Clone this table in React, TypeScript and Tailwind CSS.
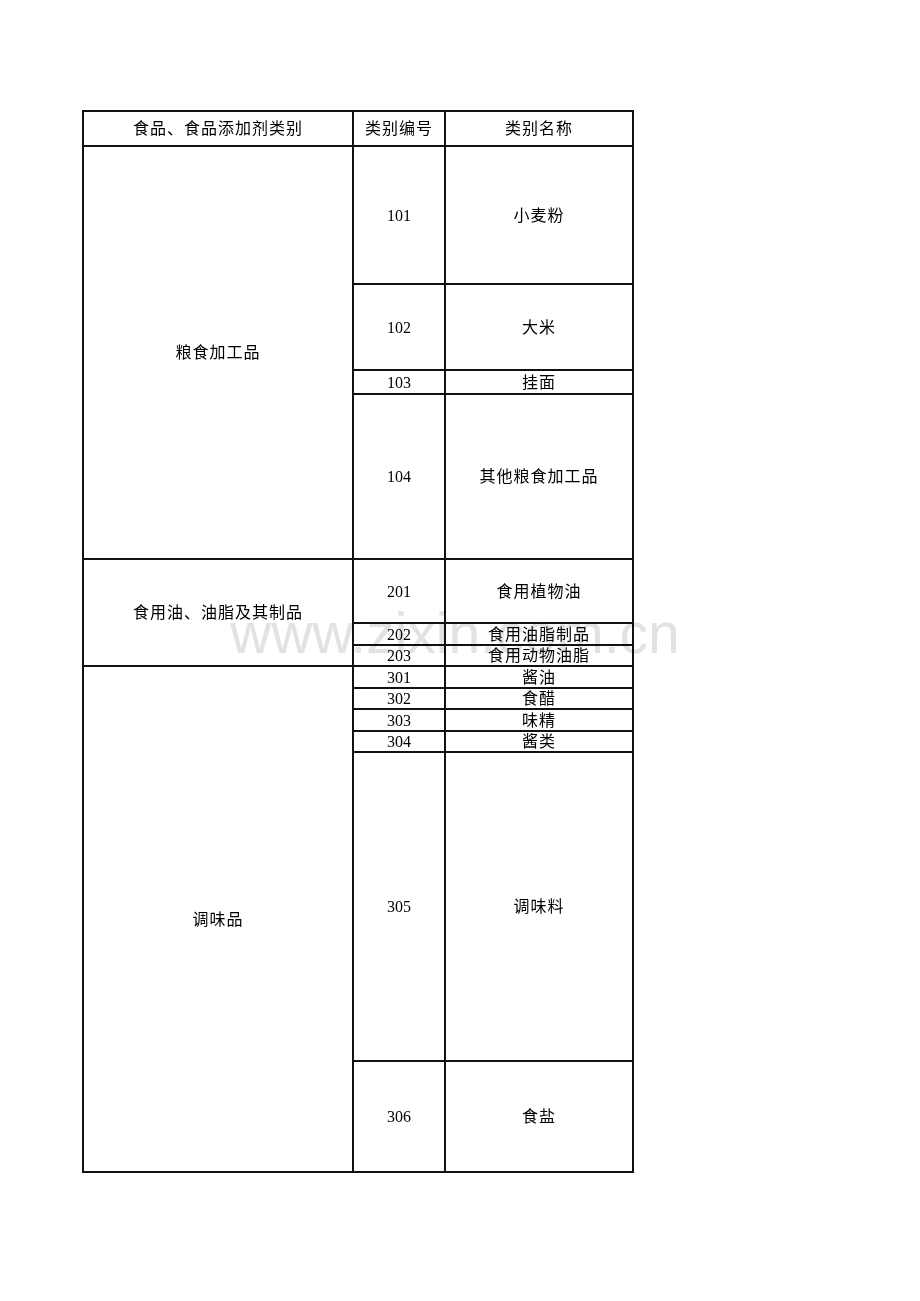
import React from "react";

const cell = "bg-white flex items-center justify-center leading-none pt-[1px]";
const cjk = "text-[16px] tracking-[1px]";
const num = "text-[16px]";

type Row = { code: string; name: string; pos: string };

const rows: Row[] = [
  { code: "101", name: "小麦粉", pos: "row-start-2" },
  { code: "102", name: "大米", pos: "row-start-3" },
  { code: "103", name: "挂面", pos: "row-start-4" },
  { code: "104", name: "其他粮食加工品", pos: "row-start-5" },
  { code: "201", name: "食用植物油", pos: "row-start-6" },
  { code: "202", name: "食用油脂制品", pos: "row-start-7" },
  { code: "203", name: "食用动物油脂", pos: "row-start-8" },
  { code: "301", name: "酱油", pos: "row-start-9" },
  { code: "302", name: "食醋", pos: "row-start-10" },
  { code: "303", name: "味精", pos: "row-start-11" },
  { code: "304", name: "酱类", pos: "row-start-12" },
  { code: "305", name: "调味料", pos: "row-start-13" },
  { code: "306", name: "食盐", pos: "row-start-14" },
];

export default function App() {
  return (
    <div className="relative w-[920px] h-[1301px] bg-white text-black font-['Liberation_Serif','Noto_Sans_CJK_SC',serif]">
      <div className="pt-[110px] pl-[82px]">
        <div className="grid w-[552px] bg-[#111] p-[2px] gap-[2px] grid-cols-[268px_90px_186px] grid-rows-[33px_136px_84px_22px_163px_62px_20px_19px_20px_19px_20px_19px_307px_109px]">
          <div className={`${cell} ${cjk} col-start-1 row-start-1`}>食品、食品添加剂类别</div>
          <div className={`${cell} ${cjk} col-start-2 row-start-1`}>类别编号</div>
          <div className={`${cell} ${cjk} col-start-3 row-start-1`}>类别名称</div>

          <div className={`${cell} ${cjk} col-start-1 row-start-2 row-span-4`}>粮食加工品</div>
          <div className={`${cell} ${cjk} col-start-1 row-start-6 row-span-3`}>食用油、油脂及其制品</div>
          <div className={`${cell} ${cjk} col-start-1 row-start-9 row-span-6`}>调味品</div>

          {rows.map((r) => (
            <React.Fragment key={r.code}>
              <div className={`${cell} ${num} col-start-2 ${r.pos}`}>{r.code}</div>
              <div className={`${cell} ${cjk} col-start-3 ${r.pos}`}>{r.name}</div>
            </React.Fragment>
          ))}
        </div>
      </div>
      <div className="absolute left-[230px] top-[605px] text-[57px] leading-none text-[#e2e2e2] mix-blend-multiply pointer-events-none whitespace-nowrap font-['Liberation_Sans',Arial,sans-serif]">
        www.zixin.com.cn
      </div>
    </div>
  );
}
